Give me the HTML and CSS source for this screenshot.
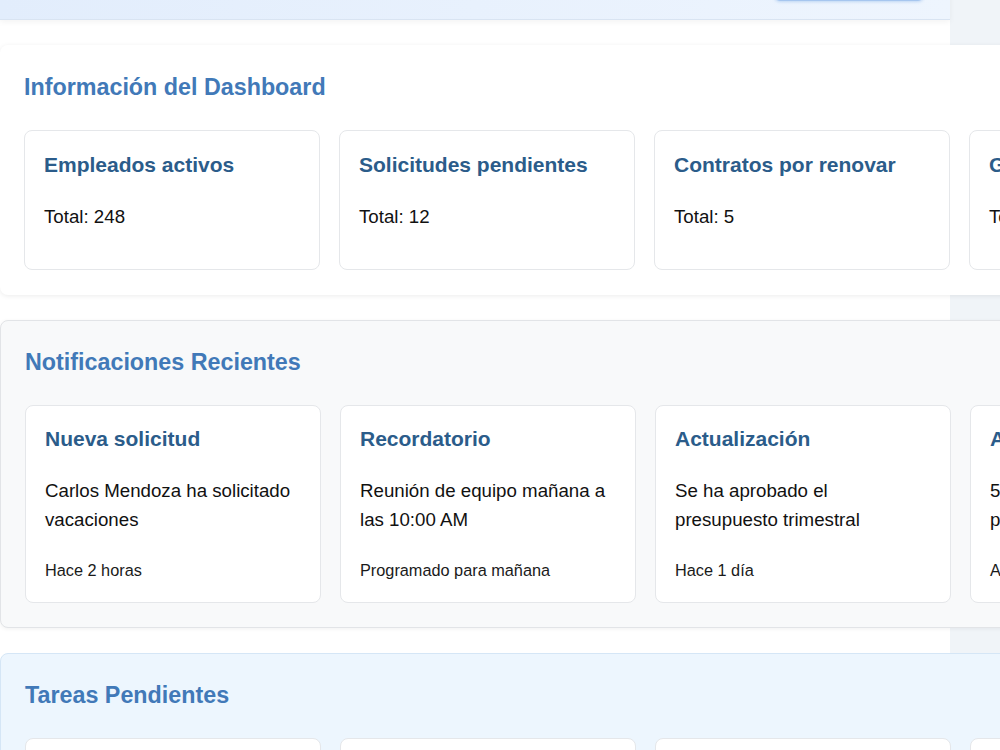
FILE: index.html
```html
<!DOCTYPE html>
<html lang="es">

<head>
    <meta charset="UTF-8" />
    <meta name="viewport" content="width=device-width, initial-scale=1.0" />
    <title>Dashboard RRHH</title>
    <link rel="stylesheet" href="styles.css">
</head>

<body>
    <div class="main">
        <header class="topbar">
            <button class="top-btn">Cerrar sesión</button>
        </header>

        <section class="panel panel-info">
            <h2>Información del Dashboard</h2>
            <div class="cards">
                <div class="card">
                    <h3>Empleados activos</h3>
                    <p>Total: 248</p>
                </div>
                <div class="card">
                    <h3>Solicitudes pendientes</h3>
                    <p>Total: 12</p>
                </div>
                <div class="card">
                    <h3>Contratos por renovar</h3>
                    <p>Total: 5</p>
                </div>
                <div class="card">
                    <h3>Gastos del mes</h3>
                    <p>Total: $12.450</p>
                </div>
            </div>
        </section>

        <section class="panel panel-notif">
            <h2>Notificaciones Recientes</h2>
            <div class="cards">
                <div class="card">
                    <h3>Nueva solicitud</h3>
                    <p>Carlos Mendoza ha solicitado vacaciones</p>
                    <span class="meta">Hace 2 horas</span>
                </div>
                <div class="card">
                    <h3>Recordatorio</h3>
                    <p>Reunión de equipo mañana a las 10:00 AM</p>
                    <span class="meta">Programado para mañana</span>
                </div>
                <div class="card">
                    <h3>Actualización</h3>
                    <p>Se ha aprobado el presupuesto trimestral</p>
                    <span class="meta">Hace 1 día</span>
                </div>
                <div class="card">
                    <h3>Alerta</h3>
                    <p>5 evaluaciones de desempeño pendientes</p>
                    <span class="meta">Ayer</span>
                </div>
            </div>
        </section>

        <section class="panel panel-tasks">
            <h2>Tareas Pendientes</h2>
            <div class="cards">
                <div class="card">
                    <h3>Revisar nóminas</h3>
                    <p>Fecha límite: viernes</p>
                </div>
                <div class="card">
                    <h3>Entrevistas</h3>
                    <p>3 candidatos programados</p>
                </div>
                <div class="card">
                    <h3>Capacitación</h3>
                    <p>Preparar material del curso</p>
                </div>
                <div class="card">
                    <h3>Auditoría</h3>
                    <p>Revisar expedientes</p>
                </div>
            </div>
        </section>
    </div>
</body>

</html>
```

FILE: styles.css
```css
* {
    margin: 0;
    padding: 0;
    box-sizing: border-box;
    font-family: 'Liberation Sans', Arial, sans-serif;
}

html,
body {
    overflow: hidden;
}

body {
    background-color: #f0f4f8;
    color: #111;
}

.main {
    width: 950px;
    min-height: 900px;
    background-color: white;
    margin-top: -56px;
}

.topbar {
    height: 76px;
    display: flex;
    align-items: flex-end;
    justify-content: flex-end;
    padding: 0 26px 18px 24px;
    background: linear-gradient(90deg, #e2edfc, #eef5fe);
    border-bottom: 1px solid #d9e4f2;
    box-shadow: 0 2px 6px rgba(0, 0, 0, 0.05);
}

.top-btn {
    width: 150px;
    height: 36px;
    border: none;
    border-bottom: 2px solid #a6c6ef;
    border-radius: 6px;
    background: linear-gradient(90deg, #d3e4f8, #dbe9fa);
    box-shadow: 0 1px 3px rgba(120, 170, 230, 0.4);
    color: #2b5c8a;
    font-size: 15px;
}

.panel {
    width: max-content;
    margin-top: 25px;
    padding: 25px 24px;
    border-radius: 8px;
    border: 1px solid transparent;
}

.panel-info {
    background-color: white;
    border: none;
    padding: 26px 24px 25px;
    box-shadow: 0 1px 5px rgba(0, 0, 0, 0.08);
}

.panel-notif {
    background-color: #f8f9fa;
    border-color: #e2e4e7;
    padding-bottom: 24px;
    box-shadow: 0 1px 4px rgba(0, 0, 0, 0.06);
}

.panel-tasks {
    background-color: #edf6fe;
    border-color: #d5e6f6;
}

.panel h2 {
    font-size: 23.3px;
    line-height: 32px;
    color: #4179b8;
    margin-bottom: 27px;
}

.cards {
    display: flex;
    gap: 19px;
}

.card {
    width: 296px;
    background-color: white;
    border: 1px solid #e5e7ea;
    border-radius: 8px;
    padding: 21px 19px 20px;
}

.panel-notif .card {
    padding-top: 20px;
}

.card h3 {
    font-size: 21px;
    line-height: 26px;
    color: #2b5c8a;
    margin-bottom: 24px;
}

.card p {
    font-size: 18.7px;
    line-height: 29px;
    margin-bottom: 18px;
}

.meta {
    display: block;
    font-size: 16.3px;
    line-height: 24px;
    margin-top: 24px;
    color: #1a1a1a;
}
```
